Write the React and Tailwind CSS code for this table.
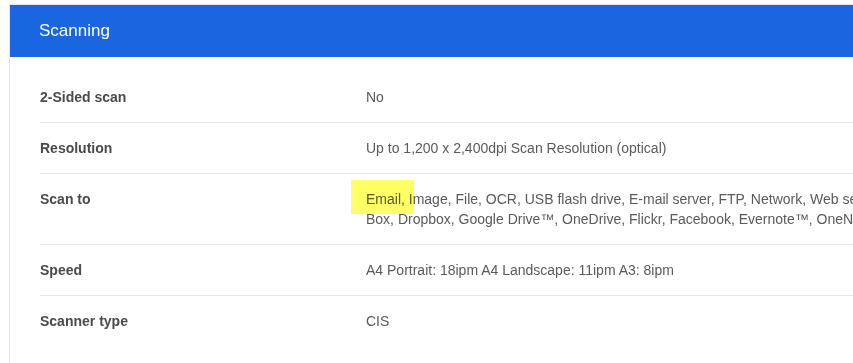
export default function App() {
  const rows = [
    { label: "2-Sided scan", value: "No" },
    { label: "Resolution", value: "Up to 1,200 x 2,400dpi Scan Resolution (optical)" },
    {
      label: "Scan to",
      value:
        "Email, Image, File, OCR, USB flash drive, E-mail server, FTP, Network, Web services, SharePoint, Box, Dropbox, Google Drive™, OneDrive, Flickr, Facebook, Evernote™, OneNote",
      mark: true,
    },
    { label: "Speed", value: "A4 Portrait: 18ipm A4 Landscape: 11ipm A3: 8ipm" },
    { label: "Scanner type", value: "CIS" },
  ];

  return (
    <div
      className="w-[853px] h-[363px] overflow-hidden bg-white pt-1 pl-[9px]"
      style={{ fontFamily: '"Liberation Sans", Arial, sans-serif' }}
    >
      <div className="w-[1100px] h-full border-l border-t border-[#e8e8e8]">
        <div className="h-[52px] bg-[#1a66e0] flex items-center pl-[29px]">
          <span className="text-white text-[17px]">Scanning</span>
        </div>
        <div className="pt-[15px] pl-[30px]">
          {rows.map((r, i) => (
            <div
              key={r.label}
              className={`flex py-[15px] ${i < rows.length - 1 ? "border-b border-[#e8e8e8]" : ""}`}
            >
              <div className="w-[326px] shrink-0 text-[14px] leading-5 font-bold text-[#4a4a4a]">
                {r.label}
              </div>
              <div className="relative w-[640px] text-[14px] leading-5 text-[#5a5a5a]">
                {r.mark && (
                  <span className="absolute left-[-15px] top-[-9px] w-[63px] h-[34px] bg-[#ffff33]/75 mix-blend-multiply" />
                )}
                {r.value}
              </div>
            </div>
          ))}
        </div>
      </div>
    </div>
  );
}
